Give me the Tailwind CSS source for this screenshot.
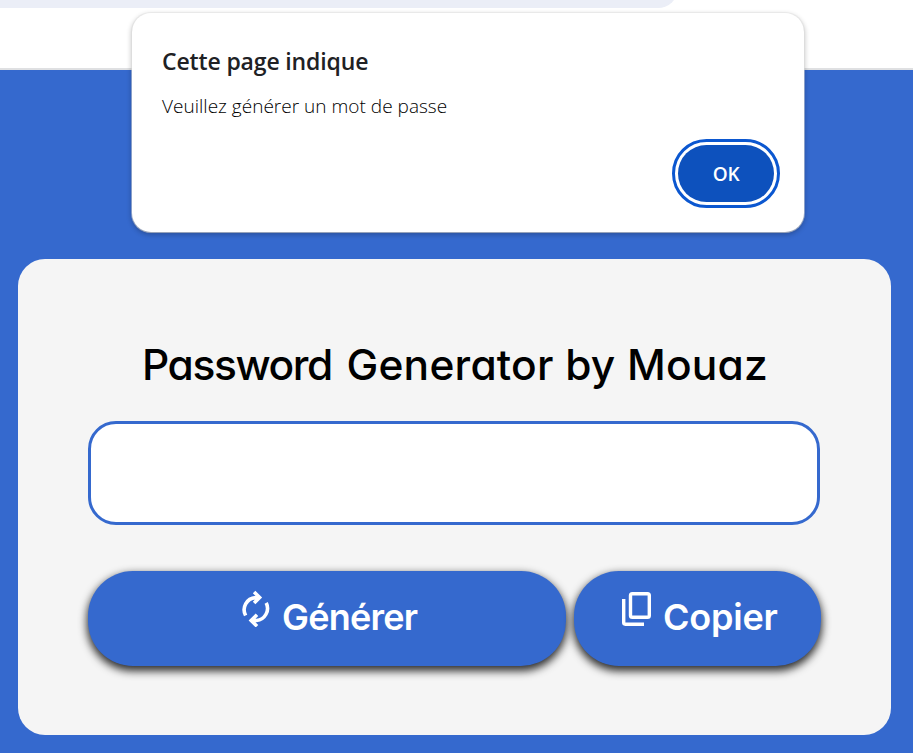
<!DOCTYPE html>
<html lang="fr">
<head>
<meta charset="utf-8">
<title>Password Generator</title>
<script src="https://cdn.jsdelivr.net/npm/@tailwindcss/browser@4"></script>
</head>
<body class="relative flex h-[753px] w-[913px] flex-col overflow-hidden bg-[#3569ce]">
  <header class="flex h-[70px] shrink-0 items-start overflow-hidden border-b-2 border-[#dfe0e2] bg-white">
    <div class="-mt-8 h-10 w-[678px] rounded-r-full bg-[#ebeef7]"></div>
  </header>

  <main class="mt-[189px] ml-[18px] flex h-[476px] w-[873px] shrink-0 flex-col rounded-[27px] bg-[#f5f5f5] pr-[69px] pl-[70px] pt-[77px] font-['Inter',sans-serif] [font-feature-settings:'cv11'_1]">
    <h1 class="ml-[54px] h-[58px] whitespace-nowrap text-[42.5px] leading-[58px] font-medium tracking-[0.2px] text-black"><span class="mr-[3px] tracking-[-1.4px]">Password</span> Generator by Mouaz</h1>
    <input type="text" aria-label="Mot de passe" class="mt-[27px] h-[104px] w-[732px] shrink-0 rounded-[28px] border-3 border-[#3569ce] bg-white px-6 text-3xl outline-none">
    <div class="mt-[46px] flex gap-2">
      <button class="flex h-[95px] w-[478px] rounded-[45px] bg-[#3569ce] pt-[19px] pl-[153px] text-[36px] leading-[54px] font-semibold text-white shadow-[0_4px_8px_1px_#000000d0]">
        <svg class="h-[37px] w-[31px] shrink-0" viewBox="0 0 31 37" fill="none" stroke="currentColor" stroke-width="3.6"><path d="M4.6 25.5A12.2 12.2 0 0 1 14.5 7.6H19M13.1 2 18.6 7.4 13.1 13M25.2 12.9A12.2 12.2 0 0 1 15.5 30.5H10M16 24.7 10.2 30.5 16 36.2"/></svg>
        <span class="ml-[10px] tracking-[-0.75px]">Générer</span>
      </button>
      <button class="flex h-[95px] w-[247px] rounded-[45px] bg-[#3569ce] pt-[19px] pl-12 text-[36px] leading-[54px] font-semibold text-white shadow-[0_4px_8px_1px_#000000d0]">
        <svg class="mt-0.5 h-[34px] w-[29px] shrink-0" viewBox="0 0 29 34" fill="none" stroke="currentColor" stroke-width="3.4"><rect x="8.5" y="1.7" width="18.8" height="23.6" rx="1.8"/><path d="M1.7 7V30.6Q1.7 32.2 3.3 32.2H22"/></svg>
        <span class="ml-3 tracking-[-0.2px]">Copier</span>
      </button>
    </div>
  </main>

  <div role="alertdialog" class="absolute top-[13px] left-[132px] flex h-[219px] w-[672px] flex-col rounded-[19px] bg-white pt-8 pl-[30px] font-['Open_Sans',sans-serif] text-[#202124] shadow-[0_0_0_1px_#e2e2e280,0_1px_1px_0_#77777780,0_2px_5px_1px_#00000038]">
    <h2 class="h-8 whitespace-nowrap text-[23px] leading-8 font-semibold tracking-[-0.14px]">Cette page indique</h2>
    <p class="mt-[15px] h-7 whitespace-nowrap text-[19px] leading-7 font-[350] tracking-[0.02px] text-black">Veuillez générer un mot de passe</p>
    <button class="mt-[25px] mr-[30px] h-[57px] w-24 shrink-0 self-end rounded-full bg-[#0d51bd] pt-px text-[19px] font-semibold tracking-[-0.3px] text-white outline-3 outline-offset-3 outline-[#0b57d0]">OK</button>
  </div>
</body>
</html>
